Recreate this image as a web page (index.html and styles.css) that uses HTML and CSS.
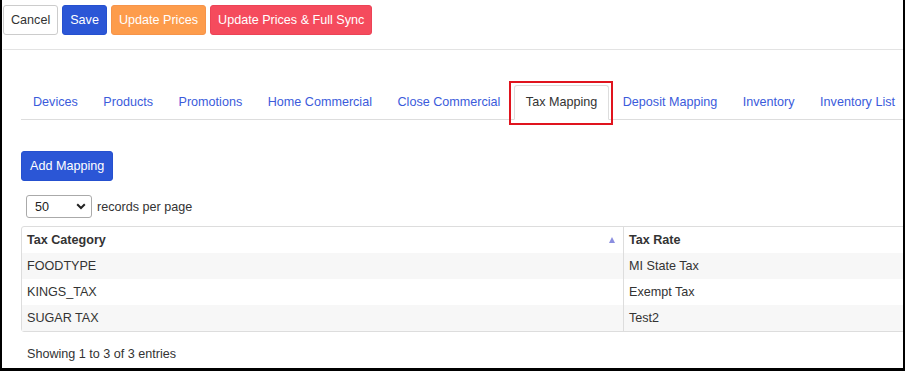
FILE: index.html
```html
<!DOCTYPE html>
<html lang="en">
<head>
    <meta charset="UTF-8">
    <title>Tax Mapping</title>
    <link rel="stylesheet" href="styles.css">
</head>
<body>
    <div class="frame">
        <div class="toolbar">
            <button class="btn btn-default">Cancel</button>
            <button class="btn btn-primary">Save</button>
            <button class="btn btn-warning">Update Prices</button>
            <button class="btn btn-danger">Update Prices &amp; Full Sync</button>
        </div>
        <div class="divider"></div>

        <div class="content">
            <ul class="nav-tabs">
                <li><a>Devices</a></li>
                <li><a>Products</a></li>
                <li><a>Promotions</a></li>
                <li><a>Home Commercial</a></li>
                <li><a>Close Commercial</a></li>
                <li class="active"><a>Tax Mapping</a></li>
                <li><a>Deposit Mapping</a></li>
                <li><a>Inventory</a></li>
                <li><a>Inventory List</a></li>
            </ul>

            <button class="btn btn-primary add-btn">Add Mapping</button>

            <div class="length-row">
                <div class="select-box">
                    <span>50</span>
                    <svg width="10" height="7" viewBox="0 0 10 7"><path d="M1.2 1.3 L5 5 L8.8 1.3" fill="none" stroke="#222" stroke-width="2"/></svg>
                </div>
                <span>records per page</span>
            </div>

            <table class="grid">
                <thead>
                    <tr>
                        <th class="col-cat">Tax Category<span class="sort-up"></span></th>
                        <th>Tax Rate</th>
                    </tr>
                </thead>
                <tbody>
                    <tr><td>FOODTYPE</td><td>MI State Tax</td></tr>
                    <tr><td>KINGS_TAX</td><td>Exempt Tax</td></tr>
                    <tr><td>SUGAR TAX</td><td>Test2</td></tr>
                </tbody>
            </table>

            <div class="info">Showing 1 to 3 of 3 entries</div>
        </div>
    </div>
</body>
</html>
```

FILE: styles.css
```css
body {
    margin: 0;
    padding: 0;
    background: #fff;
    font-family: "Liberation Sans", Arial, sans-serif;
    font-size: 12.6px;
    color: #333;
}

.frame {
    box-sizing: border-box;
    width: 905px;
    height: 371px;
    border-left: 2px solid #000;
    border-right: 2px solid #000;
    border-bottom: 3px solid #000;
    overflow: hidden;
}

.toolbar {
    display: flex;
    gap: 4px;
    padding: 5px 0 0 1px;
}

.btn {
    height: 30px;
    padding: 0 7px;
    border: 1px solid transparent;
    border-radius: 3px;
    font-family: inherit;
    font-size: 12.6px;
    color: #fff;
    cursor: pointer;
}

.btn-default {
    background: #fff;
    border-color: #ccc;
    color: #333;
}

.btn-primary {
    background: #2b56d6;
    border-color: #2550cf;
}

.btn-warning {
    background: #fd9c4c;
    border-color: #f6944a;
}

.btn-danger {
    background: #f54b5d;
    border-color: #ec4356;
}

.divider {
    margin: 14px 0 0 1px;
    height: 1px;
    background: #e3e3e3;
}

.content {
    padding-left: 19px;
}

.nav-tabs {
    display: flex;
    margin: 35px 0 0;
    padding: 0;
    list-style: none;
    border-bottom: 1px solid #ddd;
    white-space: nowrap;
}

.nav-tabs li {
    position: relative;
    margin: 0 1.5px -1px 0;
}

.nav-tabs a {
    display: block;
    padding: 8px 11px 9px;
    line-height: 16px;
    border: 1px solid transparent;
    border-radius: 3px 3px 0 0;
    color: #3b5bdb;
}

.nav-tabs .active a {
    color: #333;
    background: #fff;
    border-color: #ddd #ddd #fff;
}

.nav-tabs .active::after {
    content: "";
    position: absolute;
    top: -4px;
    left: -5px;
    right: -4px;
    bottom: -5px;
    border: 2px solid #e0141e;
}

.add-btn {
    display: block;
    margin-top: 31px;
    padding: 0 8px;
}

.length-row {
    display: flex;
    align-items: center;
    gap: 5px;
    margin: 14px 0 0 5px;
}

.select-box {
    box-sizing: border-box;
    display: flex;
    align-items: center;
    justify-content: space-between;
    width: 66px;
    height: 23px;
    padding: 0 5px 0 8px;
    border: 1px solid #aaa;
    border-radius: 3px;
    color: #222;
}

.grid {
    margin-top: 8px;
    width: 1200px;
    border-collapse: separate;
    border-spacing: 0;
    border: 1px solid #ddd;
    border-radius: 3px;
    font-size: 12.6px;
}

.grid th,
.grid td {
    height: 26px;
    padding: 0 5px;
    text-align: left;
    line-height: 16px;
    box-sizing: border-box;
}

.grid th {
    font-weight: bold;
    color: #333;
}

.grid th + th,
.grid td + td {
    border-left: 1px solid #ddd;
}

.grid .col-cat {
    width: 601px;
}

.grid tbody tr:nth-child(odd) {
    background: #f7f7f7;
}

.sort-up {
    float: right;
    margin: 5px 3px 0 0;
    width: 0;
    height: 0;
    border-left: 3.5px solid transparent;
    border-right: 3.5px solid transparent;
    border-bottom: 6px solid #8b8ee0;
}

.info {
    margin: 13px 0 0 6px;
    line-height: 18px;
}
```
